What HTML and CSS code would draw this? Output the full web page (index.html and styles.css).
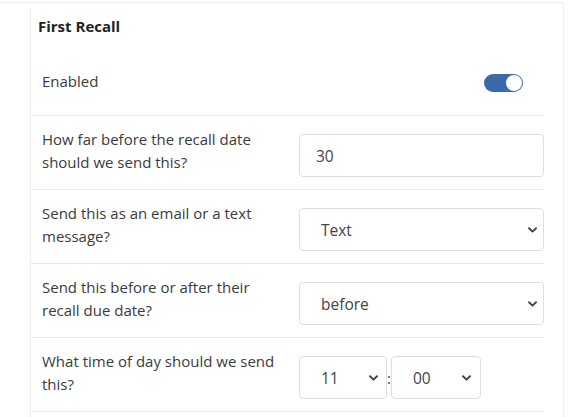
FILE: index.html
```html
<!DOCTYPE html>
<html lang="en">
<head>
<meta charset="utf-8">
<title>First Recall</title>
<link rel="stylesheet" href="styles.css">
</head>
<body>
<div class="panel">
  <section class="section">
    <h2 class="title">First Recall</h2>
    <div class="row row-switch">
      <label class="label" for="enabled">Enabled</label>
      <label class="switch">
        <input id="enabled" type="checkbox" checked>
        <span class="track"><span class="knob"></span></span>
      </label>
    </div>
    <div class="row">
      <label class="label" for="days">How far before the recall date should we send this?</label>
      <div class="control">
        <input id="days" class="field" type="text" value="30">
      </div>
    </div>
    <div class="row">
      <label class="label" for="method">Send this as an email or a text message?</label>
      <div class="control">
        <select id="method" class="field select">
          <option>Email</option>
          <option selected>Text</option>
        </select>
      </div>
    </div>
    <div class="row">
      <label class="label" for="when">Send this before or after their recall due date?</label>
      <div class="control">
        <select id="when" class="field select">
          <option selected>before</option>
          <option>after</option>
        </select>
      </div>
    </div>
    <div class="row">
      <label class="label" for="hour">What time of day should we send this?</label>
      <div class="control time">
        <select id="hour" class="field select hour">
          <option>10</option>
          <option selected>11</option>
          <option>12</option>
        </select>
        <span class="colon">:</span>
        <select id="minute" class="field select minute">
          <option selected>00</option>
          <option>30</option>
        </select>
      </div>
    </div>
  </section>
</div>
</body>
</html>
```

FILE: styles.css
```css
html, body {
  margin: 0;
  padding: 0;
  background: #ffffff;
}

body {
  font-family: "Open Sans", "Noto Sans", "Liberation Sans", sans-serif;
  font-size: 15px;
  color: #3b3b3b;
  overflow: hidden;
}

.panel {
  width: 563px;
  margin-top: 2px;
  border-top: 1px solid #ededed;
  border-right: 1px solid #ededed;
  min-height: 420px;
}

.section {
  margin: 5px 19px 0 30px;
  border-left: 1px solid #ededed;
  padding-bottom: 40px;
}

.title {
  margin: 0;
  padding: 7px 7px 0;
  font-size: 15px;
  line-height: 22px;
  font-weight: 700;
  color: #232323;
}

.row {
  display: grid;
  grid-template-columns: 1fr 245px;
  align-items: start;
  padding: 12px 0 12px;
  border-bottom: 1px solid #e9e9e9;
}

.label {
  padding: 0 17px 0 11px;
  line-height: 23px;
}

.row-switch {
  display: flex;
  justify-content: space-between;
  padding: 33px 21px 22px 0;
}

.switch {
  display: block;
  margin-top: 4px;
  cursor: pointer;
}

.switch input {
  position: absolute;
  opacity: 0;
  width: 0;
  height: 0;
}

.track {
  display: flex;
  justify-content: flex-end;
  align-items: center;
  box-sizing: border-box;
  width: 39px;
  height: 18px;
  padding: 0 1px;
  border-radius: 9px;
  background: #3c6aa8;
}

.knob {
  width: 16px;
  height: 16px;
  border-radius: 50%;
  background: #ffffff;
}

.control {
  margin-top: 6px;
  display: flex;
  align-items: center;
}

.field {
  box-sizing: border-box;
  width: 245px;
  height: 43px;
  margin: 0;
  border: 1px solid #dedede;
  border-radius: 4px;
  background-color: #ffffff;
  font-family: inherit;
  font-size: 15.5px;
  color: #444444;
  padding: 0 16px;
  outline: none;
}

.select {
  appearance: none;
  -webkit-appearance: none;
  padding-left: 21px;
  padding-right: 24px;
  background-image: url("data:image/svg+xml,%3Csvg xmlns='http://www.w3.org/2000/svg' width='9' height='6' viewBox='0 0 9 6'%3E%3Cpath d='M1 1.2 L4.5 4.6 L8 1.2' fill='none' stroke='%23444444' stroke-width='1.9' stroke-linecap='round' stroke-linejoin='round'/%3E%3C/svg%3E");
  background-repeat: no-repeat;
  background-position: right 6px center;
  background-size: 9px 6px;
}

.time {
  gap: 0;
}

.hour {
  width: 88px;
  background-position: right 8px center;
}

.minute {
  width: 90px;
  background-position: right 9px center;
}

.colon {
  width: 4px;
  text-align: center;
  color: #444444;
  line-height: 20px;
}
```
